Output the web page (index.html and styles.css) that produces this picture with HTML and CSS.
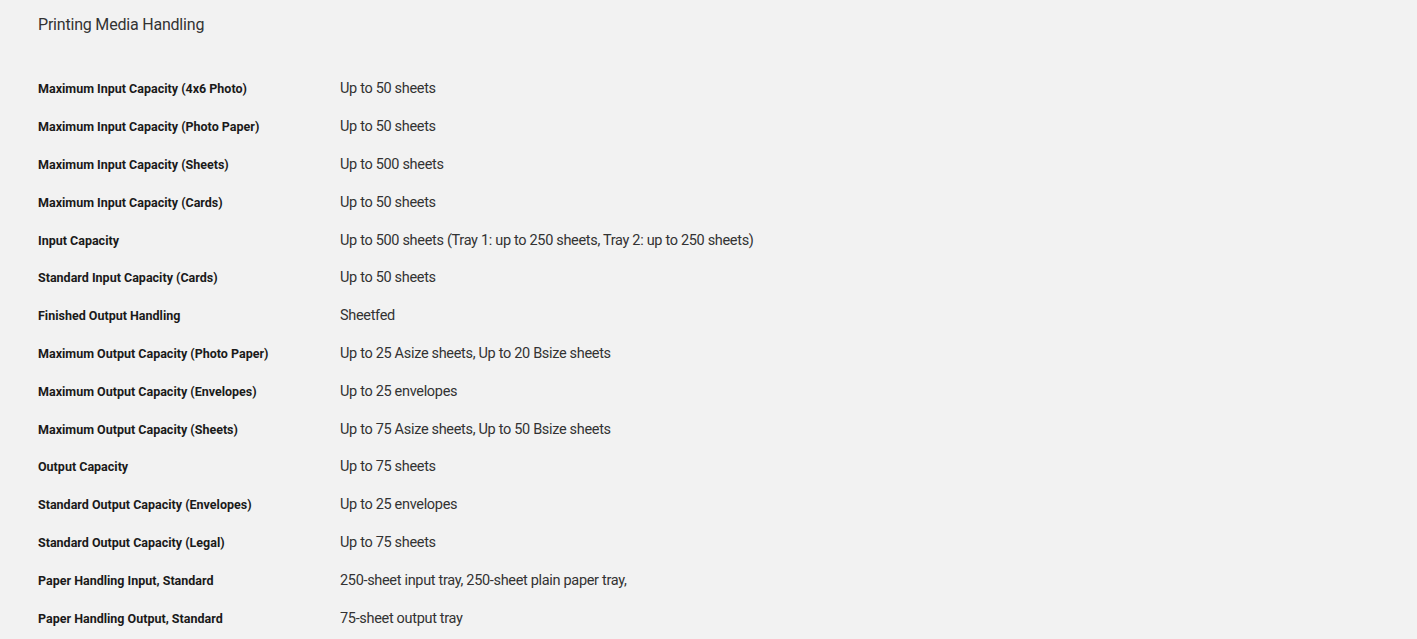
FILE: index.html
```html
<!DOCTYPE html>
<html>
<head>
<meta charset="utf-8">
<link rel="stylesheet" href="styles.css">
</head>
<body>
<section class="spec">
  <h2 class="spec-title">Printing Media Handling</h2>
  <dl class="spec-list">
    <div class="row"><dt>Maximum Input Capacity (4x6 Photo)</dt><dd>Up to 50 sheets</dd></div>
    <div class="row"><dt>Maximum Input Capacity (Photo Paper)</dt><dd>Up to 50 sheets</dd></div>
    <div class="row"><dt>Maximum Input Capacity (Sheets)</dt><dd>Up to 500 sheets</dd></div>
    <div class="row"><dt>Maximum Input Capacity (Cards)</dt><dd>Up to 50 sheets</dd></div>
    <div class="row"><dt>Input Capacity</dt><dd>Up to 500 sheets (Tray 1: up to 250 sheets, Tray 2: up to 250 sheets)</dd></div>
    <div class="row"><dt>Standard Input Capacity (Cards)</dt><dd>Up to 50 sheets</dd></div>
    <div class="row"><dt>Finished Output Handling</dt><dd>Sheetfed</dd></div>
    <div class="row"><dt>Maximum Output Capacity (Photo Paper)</dt><dd>Up to 25 Asize sheets, Up to 20 Bsize sheets</dd></div>
    <div class="row"><dt>Maximum Output Capacity (Envelopes)</dt><dd>Up to 25 envelopes</dd></div>
    <div class="row"><dt>Maximum Output Capacity (Sheets)</dt><dd>Up to 75 Asize sheets, Up to 50 Bsize sheets</dd></div>
    <div class="row"><dt>Output Capacity</dt><dd>Up to 75 sheets</dd></div>
    <div class="row"><dt>Standard Output Capacity (Envelopes)</dt><dd>Up to 25 envelopes</dd></div>
    <div class="row"><dt>Standard Output Capacity (Legal)</dt><dd>Up to 75 sheets</dd></div>
    <div class="row"><dt>Paper Handling Input, Standard</dt><dd>250-sheet input tray, 250-sheet plain paper tray,</dd></div>
    <div class="row"><dt>Paper Handling Output, Standard</dt><dd>75-sheet output tray</dd></div>
  </dl>
</section>
</body>
</html>
```
FILE: styles.css
```css
html, body {
  margin: 0;
  padding: 0;
  background: #f2f2f2;
}
body {
  font-family: Roboto, "Liberation Sans", sans-serif;
  color: #1a1a1a;
}
.spec {
  padding: 13px 38px 0;
}
.spec-title {
  margin: 0;
  font-size: 16px;
  line-height: 24px;
  font-weight: 400;
  color: #333;
  letter-spacing: -0.2px;
}
.spec-list {
  margin: 33px 0 0;
  padding: 0;
}
.row {
  display: grid;
  grid-template-columns: 302px 1fr;
  align-items: center;
  height: 37.8px;
}
.row dt {
  font-size: 12.5px;
  font-weight: 700;
  color: #1a1a1a;
  letter-spacing: 0;
}
.row dd {
  margin: 0;
  font-size: 14.5px;
  color: #333;
  letter-spacing: -0.32px;
}
```
